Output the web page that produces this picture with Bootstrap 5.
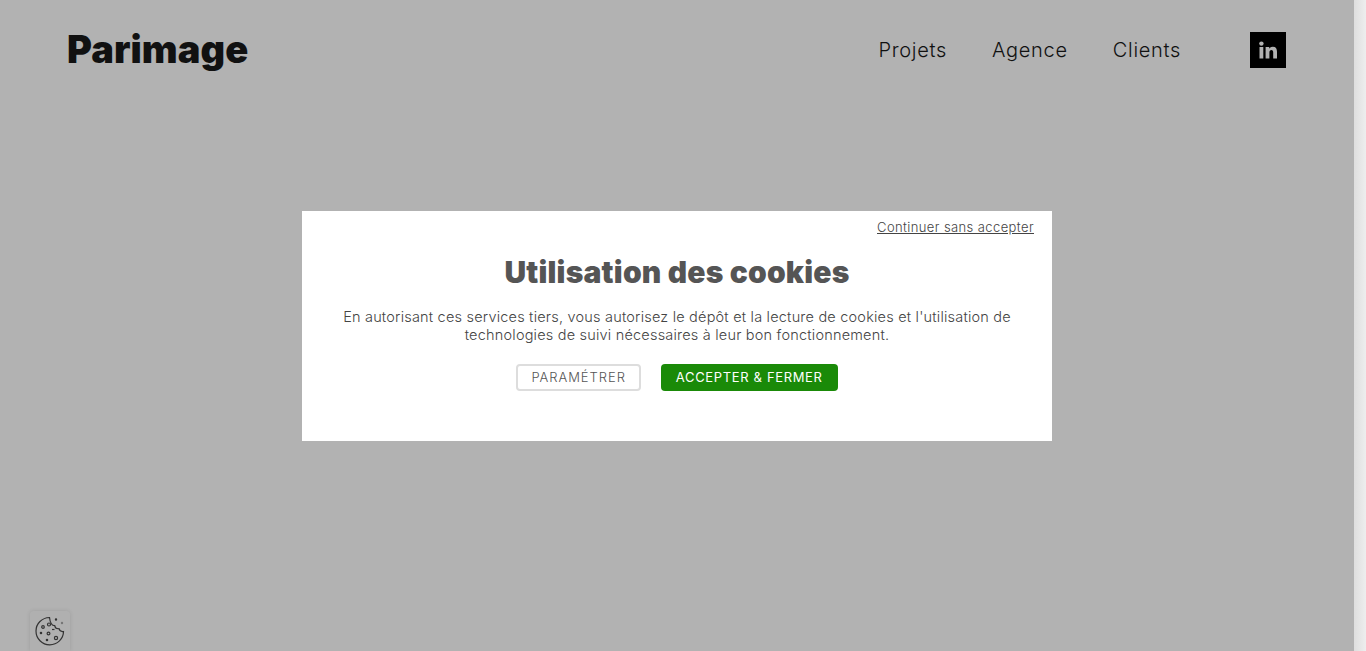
<!DOCTYPE html>
<html lang="fr">
<head>
  <meta charset="UTF-8">
  <meta name="viewport" content="width=device-width, initial-scale=1.0">
  <title>Parimage</title>
  <link href="https://cdn.jsdelivr.net/npm/bootstrap@5.3.0/dist/css/bootstrap.min.css" rel="stylesheet">
  <style>
    html, body {
      height: 100%;
      overflow: hidden;
    }
    body {
      background-color: #b2b2b2;
      font-family: "Inter", "Liberation Sans", sans-serif;
      color: #555;
    }
    .scroll-strip {
      position: fixed;
      top: 0;
      right: 0;
      bottom: 0;
      width: 12px;
      background: linear-gradient(to right, #dedede, #eeeeee);
    }
    .site-head {
      padding: 32px 68px 0 67px;
      margin-right: 12px;
    }
    .site-logo {
      font-weight: 900;
      font-size: 38px;
      line-height: 36px;
      color: #111;
      letter-spacing: 0.1px;
      text-decoration: none;
      margin-top: -3px;
    }
    .site-menu {
      gap: 45px;
      margin-right: 69px;
    }
    .site-menu a {
      font-size: 20px;
      font-weight: 300;
      letter-spacing: 0.7px;
      color: #111;
      text-decoration: none;
    }
    .in-box {
      width: 36px;
      height: 36px;
      background: #000;
    }
    .cookie-modal {
      position: fixed;
      left: 302px;
      top: 211px;
      width: 750px;
      height: 230px;
      background: #fff;
      text-align: center;
      padding: 8px 18px 0 18px;
    }
    .skip-link {
      font-size: 13px;
      font-weight: 300;
      letter-spacing: 0.4px;
      color: #444;
      line-height: 17px;
      display: block;
    }
    .cookie-title {
      font-size: 30px;
      font-weight: 900;
      letter-spacing: 0.2px;
      color: #555;
      line-height: 36px;
      margin: 18px 0 18px;
    }
    .cookie-text {
      font-size: 14.5px;
      font-weight: 300;
      letter-spacing: 0.2px;
      line-height: 18px;
      margin: 0 0 20px;
      color: #444;
    }
    .btn-line {
      gap: 20px;
    }
    .btn-param, .btn-accept {
      font-size: 13px;
      font-weight: 300;
      letter-spacing: 0.95px;
      line-height: 17px;
      padding: 5px 15px;
      border-radius: 4px;
      height: 27px;
    }
    .btn-param {
      color: #555;
      background: #fff;
      border: 2px solid #ddd;
      padding: 3px 13px;
    }
    .btn-accept {
      color: #fff;
      font-weight: 400;
      letter-spacing: 0.65px;
      background: #1a8a08;
      border: 0;
    }
    .cookie-tab {
      position: fixed;
      left: 30px;
      bottom: 0;
      width: 40px;
      height: 40px;
      background: #b0b0b0;
      border-radius: 4px 4px 0 0;
      box-shadow: 0 0 4px rgba(0, 0, 0, .12);
    }
  </style>
</head>
<body>
  <header class="site-head d-flex justify-content-between align-items-center">
    <a class="site-logo" href="#">Parimage</a>
    <div class="d-flex align-items-center">
      <nav class="site-menu d-flex">
        <a href="#">Projets</a>
        <a href="#">Agence</a>
        <a href="#">Clients</a>
      </nav>
      <a class="in-box d-flex align-items-center justify-content-center" href="#" aria-label="LinkedIn">
        <svg width="20" height="20" viewBox="0 0 20 20" fill="#b2b2b2">
          <circle cx="3.4" cy="3.6" r="2.2"/>
          <rect x="1.5" y="7" width="3.800" height="11.500"/>
          <path d="M7.600 7h3.600v1.700c.7-1.200 2-2 3.600-2 3 0 4.200 1.900 4.200 5v6.800h-3.800v-6c0-1.600-.5-2.600-1.800-2.600s-2 1-2 2.600v6H7.600z"/>
        </svg>
      </a>
    </div>
  </header>

  <div class="scroll-strip"></div>

  <div class="cookie-modal">
    <div class="text-end"><a class="skip-link" href="#">Continuer sans accepter</a></div>
    <h1 class="cookie-title">Utilisation des cookies</h1>
    <p class="cookie-text">En autorisant ces services tiers, vous autorisez le dépôt et la lecture de cookies et l'utilisation de technologies de suivi nécessaires à leur bon fonctionnement.</p>
    <div class="btn-line d-flex justify-content-center">
      <button class="btn-param" type="button">PARAMÉTRER</button>
      <button class="btn-accept" type="button">ACCEPTER &amp; FERMER</button>
    </div>
  </div>

  <div class="cookie-tab d-flex align-items-center justify-content-center">
    <svg width="30" height="30" viewBox="0 0 30 30" fill="none" stroke="#333" stroke-width="1.200">
      <path d="M14.500 1.500c-7.500.2-13.500 6-13.500 13.500 0 7.600 6 13.800 13.800 13.800 7.500 0 13.700-6 13.700-13.300-2.300.3-4-.8-4.500-2.800-2.300.3-4-1-4.300-3-2.800 0-4.700-3.500-5.200-8.200z"/>
      <circle cx="8" cy="11" r="1.300"/>
      <circle cx="14" cy="8.500" r="1.500"/>
      <circle cx="6" cy="17" r=".7"/>
      <circle cx="13.500" cy="17.500" r="1.400"/>
      <circle cx="21" cy="22" r="1.600"/>
      <circle cx="12" cy="24" r=".7"/>
      <path d="M17 13.500h2.500"/>
      <circle cx="21" cy="3.500" r=".6"/>
      <circle cx="27" cy="7" r=".6" stroke="#777"/>
    </svg>
  </div>
</body>
</html>
